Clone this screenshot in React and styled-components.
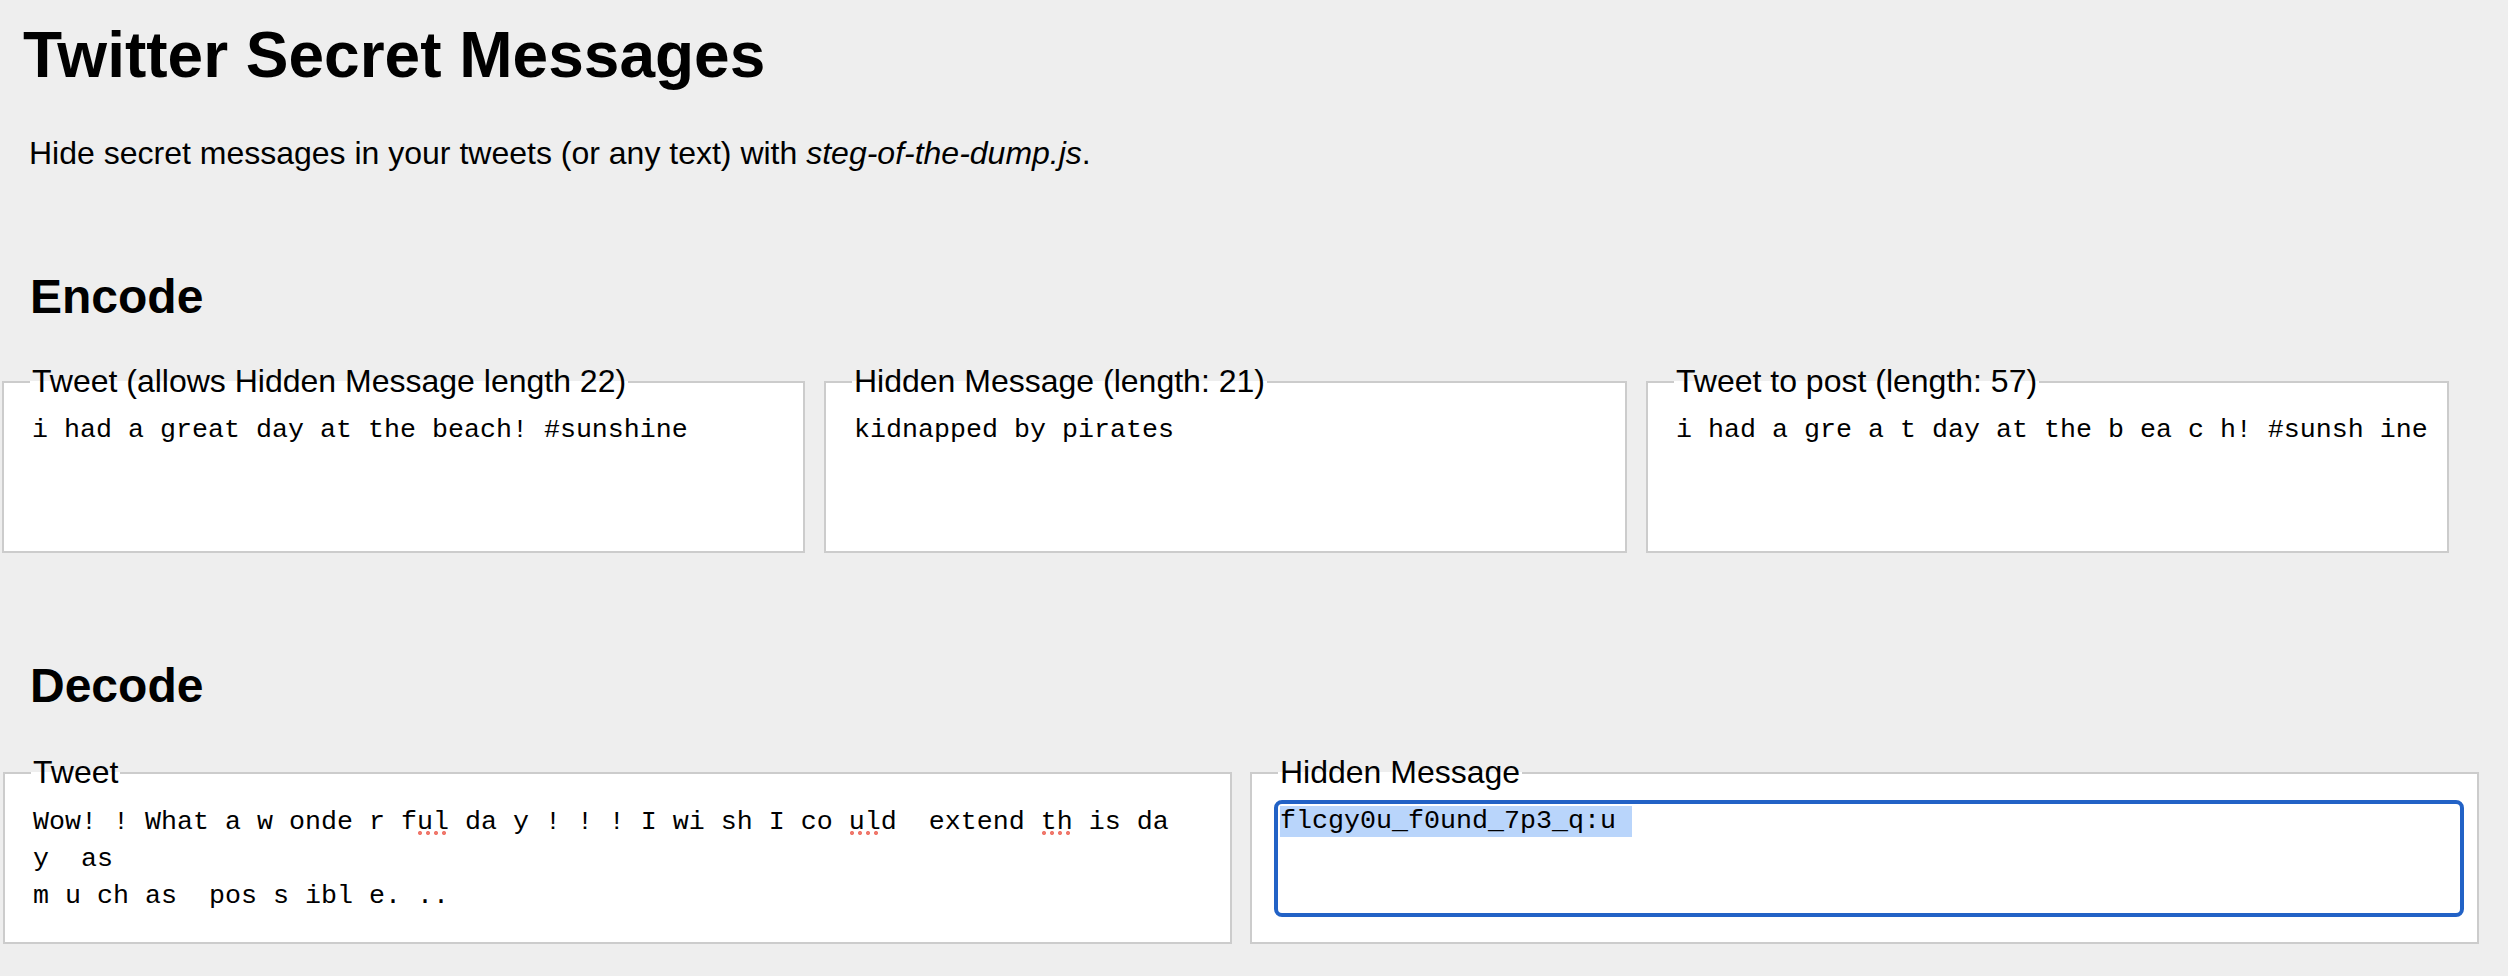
import React, { useEffect, useRef } from 'react';
import styled, { createGlobalStyle } from 'styled-components';

const GlobalStyle = createGlobalStyle`
  html,
  body {
    margin: 0;
    background: #eeeeee;
  }

  body {
    font-family: 'Liberation Sans', Arial, sans-serif;
    color: #000;
  }
`;

const Page = styled.main`
  padding-top: 18px;
`;

const Title = styled.h1`
  margin: 0;
  padding-left: 23px;
  font-size: 64px;
  line-height: 74px;
  font-weight: bold;
`;

const Intro = styled.p`
  margin: 43px 0 0;
  padding-left: 29px;
  font-size: 32px;
  line-height: 37px;
`;

const SectionTitle = styled.h2`
  margin: ${(p) => p.$gap}px 0 0;
  padding-left: 30px;
  font-size: 48px;
  line-height: 55px;
  font-weight: bold;
`;

const Row = styled.div`
  display: grid;
  grid-template-columns: repeat(${(p) => p.$cols}, ${(p) => p.$width}px);
  column-gap: ${(p) => p.$gap}px;
  margin-top: ${(p) => p.$top}px;
  padding-left: ${(p) => p.$left}px;
`;

const Box = styled.fieldset`
  margin: 0;
  min-width: 0;
  padding: 13px 17px 29px 26px;
  border: 2px solid #cccccc;
  background: #fff;
`;

const Caption = styled.legend`
  padding: 0 2px;
  font-size: 32px;
  line-height: 37px;
`;

const FieldWrap = styled.div`
  position: relative;
`;

const Field = styled.textarea`
  display: block;
  box-sizing: border-box;
  width: 100%;
  height: 109px;
  margin: 0;
  padding: ${(p) => (p.$loose ? '0 2px' : '2px 2px 0')};
  border: 0;
  border-radius: 4px;
  background: #fff;
  font-family: 'Liberation Mono', 'Courier New', monospace;
  font-size: 26.67px;
  line-height: ${(p) => (p.$loose ? '37px' : '31px')};
  color: #000;
  white-space: pre-wrap;
  resize: none;
  overflow: hidden;
  outline: ${(p) => (p.$focused ? '4px solid #2262c6' : 'none')};
  outline-offset: 0;

  &::selection {
    background: #b9d5fb;
  }
`;

const SpellMark = styled.span`
  position: absolute;
  top: 27px;
  width: 32px;
  height: 4px;
  background: radial-gradient(circle at 3px 2px, #f0786c 1.8px, transparent 2.3px) 0 0 / 8px 4px repeat-x;
  pointer-events: none;
`;

const decodeTweet =
  'Wow! ! What a w onde r ful da y ! ! ! I wi sh I co uld  extend th is da\n' +
  'y  as\n' +
  'm u ch as  pos s ibl e. ..';

const spellMarks = [24, 51, 63];

const hiddenFound = 'flcgy0u_f0und_7p3_q:u ';

const SelectedField = ({ value }) => {
  const ref = useRef(null);

  useEffect(() => {
    const el = ref.current;
    if (!el) return;
    el.focus();
    el.setSelectionRange(0, value.length);
  }, [value]);

  return <Field ref={ref} defaultValue={value} spellCheck={false} $focused />;
};

export default function App() {
  return (
    <>
      <GlobalStyle />
      <Page>
        <Title>Twitter Secret Messages</Title>
        <Intro>
          Hide secret messages in your tweets (or any text) with{' '}
          <em>steg-of-the-dump.js</em>.
        </Intro>

        <SectionTitle $gap={97}>Encode</SectionTitle>
        <Row $cols={3} $width={803} $gap={19} $top={39} $left={2}>
          <Box>
            <Caption>Tweet (allows Hidden Message length 22)</Caption>
            <Field
              defaultValue="i had a great day at the beach! #sunshine"
              spellCheck={false}
            />
          </Box>
          <Box>
            <Caption>Hidden Message (length: 21)</Caption>
            <Field defaultValue="kidnapped by pirates" spellCheck={false} />
          </Box>
          <Box>
            <Caption>Tweet to post (length: 57)</Caption>
            <Field
              defaultValue="i had a gre a t day at the b ea c h! #sunsh ine"
              spellCheck={false}
            />
          </Box>
        </Row>

        <SectionTitle $gap={105}>Decode</SectionTitle>
        <Row $cols={2} $width={1229} $gap={18} $top={41} $left={3}>
          <Box>
            <Caption>Tweet</Caption>
            <FieldWrap>
              <Field defaultValue={decodeTweet} spellCheck={false} $loose />
              {spellMarks.map((i) => (
                <SpellMark key={i} style={{ left: 2 + i * 16 }} />
              ))}
            </FieldWrap>
          </Box>
          <Box>
            <Caption>Hidden Message</Caption>
            <SelectedField value={hiddenFound} />
          </Box>
        </Row>
      </Page>
    </>
  );
}
